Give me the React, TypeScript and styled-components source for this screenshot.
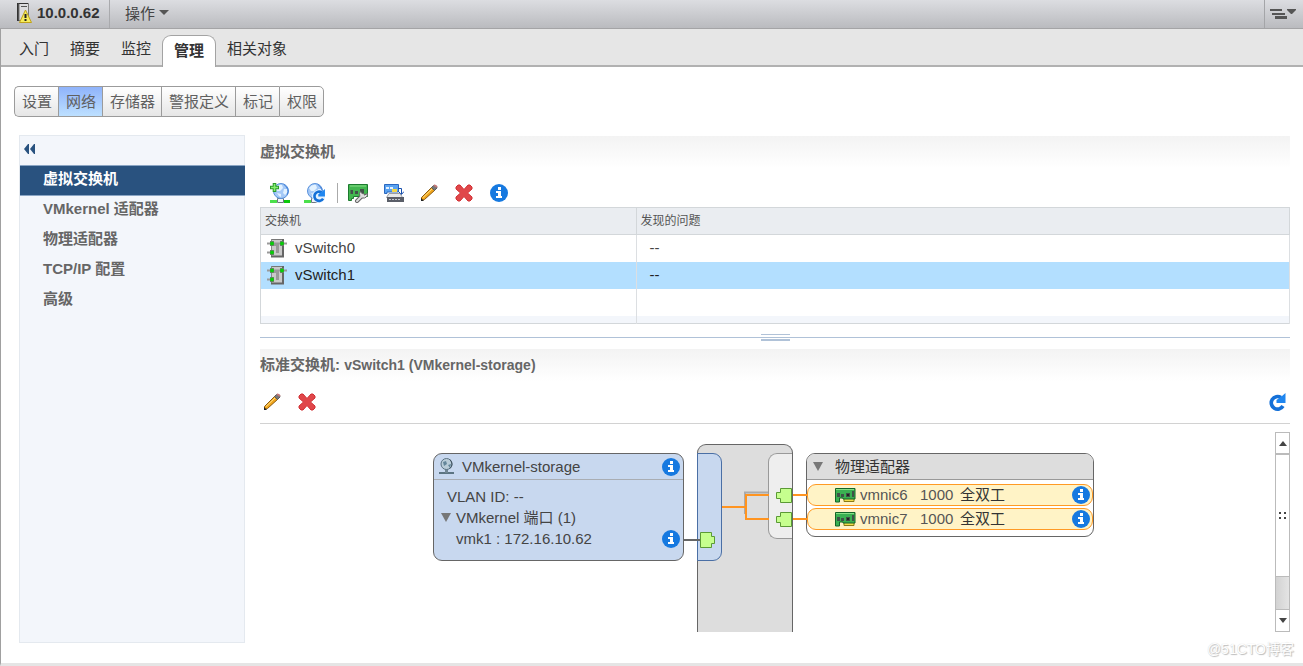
import React from "react";
import styled, { createGlobalStyle, css } from "styled-components";

const Global = createGlobalStyle`
  * { box-sizing: border-box; }
  body {
    margin: 0;
    background: #fff;
    color: #333;
    font: 15px/20px "Liberation Sans", "Noto Sans CJK SC", sans-serif;
  }
  button {
    font: inherit;
    color: inherit;
    background: none;
    border: 0;
    padding: 0;
    margin: 0;
    cursor: pointer;
  }
  a { color: inherit; text-decoration: none; }
  svg { display: block; }
`;

const Page = styled.div`
  display: flex;
  flex-direction: column;
  min-height: 100vh;
`;

/* ---------- header ---------- */

const TitleBar = styled.header`
  display: flex;
  align-items: stretch;
  height: 29px;
  background: linear-gradient(#dcdde1, #babbbf);
  border-bottom: 1px solid #a4a4a6;
`;

const HostName = styled.h1`
  display: flex;
  align-items: center;
  gap: 4px;
  width: 110px;
  margin: 0;
  padding: 0 0 3px 16px;
  border-right: 1px solid #a9aaad;
  font-size: 15px;
  line-height: 20px;
  white-space: nowrap;
`;

const ActionsButton = styled.button`
  display: flex;
  align-items: center;
  gap: 4px;
  padding-left: 15px;
  color: #444;
`;

const Caret = styled.span`
  border: 5px solid transparent;
  border-top-color: #555;
  border-bottom: 0;
  margin-bottom: 4px;
`;

const ViewMenuButton = styled.button`
  width: 39px;
  margin-left: auto;
  padding-left: 5px;
  border-left: 1px solid #a4a5a8;
`;

const Frame = styled.div`
  flex: 1;
  display: flex;
  flex-direction: column;
  border-left: 1px solid #a0a0a0;
  border-bottom: 3px solid #e5e5e5;
`;

const TabStrip = styled.nav`
  display: flex;
  align-items: flex-end;
  gap: 1px;
  height: 38px;
  padding-left: 8px;
  background: #e6e6e6;
  border-bottom: 2px solid #b1b1b1;
`;

const Tab = styled.a<{ $active?: boolean }>`
  height: 30px;
  padding: 4px 10px 0;
  line-height: 20px;
  ${(p) =>
    p.$active &&
    css`
      height: 32px;
      margin-bottom: -2px;
      padding: 5px 11px 0;
      background: #fff;
      border: 1px solid #a3a3a3;
      border-bottom: 0;
      border-radius: 9px 9px 0 0;
      font-weight: bold;
    `}
`;

const Segments = styled.div`
  display: flex;
  margin: 19px 0 0 13px;
`;

const Segment = styled.button<{ $active?: boolean }>`
  height: 31px;
  padding: 0 6px 0 7px;
  border: 1px solid #9b9b9b;
  border-right-width: 0;
  background: ${(p) =>
    p.$active ? "linear-gradient(#8fb3fb, #bde0ff)" : "linear-gradient(#fff, #e6e6e6)"};
  color: #606060;
  &:first-child { border-radius: 5px 0 0 5px; }
  &:last-child { border-radius: 0 5px 5px 0; border-right-width: 1px; }
`;

/* ---------- body ---------- */

const Body = styled.div`
  flex: 1;
  display: flex;
  gap: 15px;
  padding: 18px 13px 20px 18px;
`;

const Sidebar = styled.aside`
  width: 226px;
  flex: none;
  background: #f3f6fb;
  border: 1px solid #e4e9ef;
`;

const CollapseButton = styled.button`
  display: block;
  height: 29px;
  padding: 0 4px 3px;
`;

const SideLink = styled.a<{ $active?: boolean }>`
  display: block;
  height: 30px;
  padding: 3px 23px;
  font-weight: bold;
  color: #666;
  ${(p) =>
    p.$active &&
    css`
      height: 31px;
      margin-right: -1px;
      color: #fff;
      background: #29527f;
      border: solid #8aa5c4;
      border-width: 1px 0;
    `}
`;

const Main = styled.main`
  flex: 1;
  min-width: 0;
  display: flex;
  flex-direction: column;
  padding-top: 1px;
`;

const SectionTitle = styled.h2`
  margin: 0;
  height: 32px;
  padding: 6px 0;
  font-size: 15px;
  line-height: 20px;
  color: #666;
  background: linear-gradient(#f3f3f3, #fff);
`;

const SectionObject = styled.span`
  font-size: 14px;
`;

const Toolbar = styled.div<{ $ruled?: boolean }>`
  display: flex;
  align-items: center;
  height: 39px;
  padding: 10px 0 0 2px;
  ${(p) =>
    p.$ruled &&
    css`
      height: 43px;
      padding: 0;
      border-bottom: 1px solid #d2d2d2;
      button {
        justify-content: flex-start;
        padding-left: 3px;
      }
    `}
`;

const ToolButton = styled.button<{ $end?: boolean }>`
  display: flex;
  justify-content: center;
  align-items: center;
  width: ${(p) => (p.$end ? 25 : 35)}px;
  height: 24px;
  margin-left: ${(p) => (p.$end ? "auto" : 0)};
`;

const Divider = styled.span`
  width: 1px;
  height: 20px;
  margin: 0 3px 0 5px;
  background: #aaa;
`;

const Table = styled.table`
  width: 100%;
  table-layout: fixed;
  border-collapse: collapse;
  border: 1px solid #d3d7da;
  th {
    width: 63.5%;
    height: 27px;
    padding: 0 4px;
    background: #eaedf1;
    border: 1px solid #d3d7da;
    font-size: 12px;
    font-weight: normal;
    text-align: left;
    color: #555;
  }
  th:first-child { width: 36.5%; }
  td {
    height: 27px;
    padding: 0 13px;
    border-right: 1px solid #dcdfe2;
  }
  td:first-child { padding: 0 6px; }
`;

const Row = styled.tr<{ $selected?: boolean }>`
  background: ${(p) => (p.$selected ? "#b3dfff" : "#fff")};
  color: ${(p) => (p.$selected ? "#222" : "#444")};
`;

const TailRow = styled.tr`
  background: #f3f6fb;
  && td { height: 8px; }
`;

const SwitchName = styled.span`
  display: flex;
  align-items: center;
  gap: 8px;
`;

const Splitter = styled.div`
  display: flex;
  flex-direction: column;
  justify-content: center;
  align-items: center;
  height: 25px;
  background: linear-gradient(#b0c2d8, #b0c2d8) 0 13px / 100% 1px no-repeat;
`;

const Grip = styled.span`
  width: 29px;
  height: 7px;
  margin-top: 2px;
  background: #fff;
  border: solid #b0c2d8;
  border-width: 1px 0 2px;
  &::before {
    content: "";
    display: block;
    height: 1px;
    margin-top: 2px;
    background: #b0c2d8;
  }
`;

/* ---------- topology ---------- */

const Viewport = styled.div`
  flex: 1;
  display: flex;
  min-height: 200px;
  margin: 8px 0 11px;
`;

const Canvas = styled.div`
  flex: 1;
  display: flex;
  justify-content: center;
  padding-right: 8px;
  overflow: hidden;
`;

const Topology = styled.div`
  position: relative;
  display: flex;
  align-items: flex-start;
  gap: 13px;
  padding-top: 21px;
`;

const Wires = styled.svg`
  position: absolute;
  left: 0;
  top: 0;
`;

const PortGroup = styled.section`
  width: 251px;
  height: 108px;
  background: #c8d8ef;
  border: 1px solid #666;
  border-radius: 9px;
  color: #444;
`;

const PortGroupHead = styled.div`
  display: flex;
  align-items: center;
  gap: 8px;
  height: 26px;
  padding: 0 3px 0 5px;
  border-bottom: 1px solid #a9adb3;
`;

const PortLines = styled.div`
  padding: 6px 3px 0 13px;
`;

const Line = styled.div<{ $tree?: boolean; $indent?: boolean }>`
  display: flex;
  align-items: center;
  gap: 5px;
  height: 21px;
  margin-left: ${(p) => (p.$tree ? -6 : p.$indent ? 9 : 0)}px;
`;

const InfoButton = styled.button`
  margin-left: auto;
`;

const Twisty = styled.button`
  &::before {
    content: "";
    display: block;
    border: 5px solid transparent;
    border-top: 9px solid #777;
    border-bottom: 0;
  }
`;

const Backplane = styled.div`
  display: flex;
  justify-content: space-between;
  align-items: flex-start;
  width: 96px;
  align-self: stretch;
  margin-top: -9px;
  padding-top: 8px;
  background: #ddd;
  border: 1px solid #666;
  border-bottom: 0;
  border-radius: 9px 9px 0 0;
`;

const PortSide = styled.div`
  width: 25px;
  height: 108px;
  margin-left: -1px;
  background: #c8d8ef;
  border: 1px solid #4a6fa5;
  border-radius: 0 9px 9px 0;
`;

const UplinkSide = styled.div`
  width: 24px;
  height: 86px;
  background: #eee;
  border: 1px solid #999;
  border-right: 0;
  border-radius: 9px 0 0 9px;
`;

const Adapters = styled.section`
  width: 288px;
  height: 84px;
  background: #fff;
  border: 1px solid #666;
  border-radius: 9px;
`;

const AdaptersHead = styled.div`
  display: flex;
  align-items: center;
  gap: 12px;
  height: 26px;
  margin-bottom: 4px;
  padding-left: 6px;
  background: #ddd;
  border-bottom: 1px solid #999;
  border-radius: 8px 8px 0 0;
`;

const Nic = styled.div`
  display: flex;
  align-items: center;
  height: 22px;
  margin-bottom: 2px;
  padding: 0 2px 0 27px;
  background: #fff3c6;
  border: 1px solid #ff9a24;
  border-radius: 9px;
`;

const NicName = styled.span`
  width: 64px;
  padding-left: 4px;
  color: #555;
`;

const NicSpeed = styled.span`
  width: 40px;
  color: #555;
`;

/* ---------- scroll bar ---------- */

const ScrollBar = styled.div`
  display: flex;
  flex-direction: column;
  width: 15px;
  border: 1px solid #bbb;
  background: linear-gradient(90deg, #d2d2d2, #e4e4e4);
`;

const ScrollArrow = styled.button<{ $down?: boolean }>`
  display: flex;
  align-items: center;
  justify-content: center;
  height: 22px;
  background: #fff;
  border: solid #bbb;
  border-width: ${(p) => (p.$down ? "1px 0 0" : "0 0 2px")};
  &::before {
    content: "";
    border: 4px solid transparent;
    ${(p) => (p.$down ? "border-top: 5px solid #444; border-bottom: 0;" : "border-bottom: 5px solid #444; border-top: 0;")}
  }
`;

const ScrollThumb = styled.div`
  flex: 122;
  display: flex;
  align-items: center;
  justify-content: center;
  background: #fff;
  border-bottom: 1px solid #bbb;
`;

const ScrollTrack = styled.div`
  flex: 32;
`;

const Watermark = styled.div`
  position: absolute;
  right: 9px;
  bottom: 7px;
  font-size: 14px;
  line-height: 20px;
  color: #fff;
  text-shadow: 1px 1px 1px #bbb, 0 0 1px #ccc;
`;

/* ---------- icons ---------- */

const HostIcon = () => (
  <svg width="17" height="21" viewBox="0 0 17 21">
    <path d="M1 1h2v18H1z" fill="#333" />
    <path d="M3 1.500h9.500v17H3z" fill="#dcdcde" stroke="#777" />
    <path d="M3 1.500h9" stroke="#333" />
    <path d="M5 4.500h6" stroke="#555" />
    <path d="M9.500 8 15.500 20.500h-12z" fill="#f6ec5c" stroke="#c0a21a" strokeLinejoin="round" />
    <path d="M8.500 12h2v4h-2zM8.500 17h2v2h-2z" fill="#222" />
  </svg>
);

const ViewMenuIcon = () => (
  <svg width="28" height="12" viewBox="0 0 28 12">
    <path d="M0 1h12v2H0zM2 5h13v2H2zM5 8h12v3H5z" fill="#555" />
    <path d="M17 1h9v1l-4 4h-1l-4-4z" fill="#555" />
  </svg>
);

const CollapseIcon = () => (
  <svg width="11" height="10" viewBox="0 0 11 10">
    <path d="M0 5 4 0h1v10H4zM6 5l4-5h1v10h-1z" fill="#29527f" />
  </svg>
);

const Globe = () => (
  <>
    <path d="M0 17h7v3H0z" fill="#4be04b" />
    <path d="M14 17h6v3h-6z" fill="#0bc80b" />
    <path d="M7.500 15.500h6v4h-6z" fill="#f2f5f7" stroke="#6d7780" />
    <circle cx="11" cy="8" r="7.500" fill="#a5c9f7" stroke="#5a92dc" />
    <path d="M5 5q3-4 7-3l1 3-3 3-3 0zM14 6l3 0 1 3-3 3-2-2zM7 10l4 1 0 3-2-1z" fill="#e3f2ff" />
    <path d="M14 1.500q6 5 3 10" stroke="#3f7fd8" fill="none" />
  </>
);

const RefreshShape = () => (
  <>
    <path d="M13 4.500A6.300 6.300 0 1 0 15 13" fill="none" stroke="#1470d8" strokeWidth="3.600" />
    <path d="M14 3 17.500 0v10H8.500V7z" fill="#1f86f0" />
  </>
);

const AddNetworkIcon = () => (
  <svg width="20" height="20" viewBox="0 0 20 20">
    <Globe />
    <path d="M4.500 0v9M0 4.500h9" stroke="#2a9a2a" strokeWidth="3.600" />
    <path d="M4.500 1v7M1 4.500h7" stroke="#86ee70" strokeWidth="1.600" />
  </svg>
);

const RefreshNetworkIcon = () => (
  <svg width="21" height="20" viewBox="0 0 21 20">
    <Globe />
    <path d="M14 16h7v4h-7z" fill="#fff" />
    <g transform="translate(8 6) scale(.74)">
      <circle cx="9" cy="10" r="9" fill="#e2f1ff" />
      <RefreshShape />
    </g>
  </svg>
);

const CardShape = () => (
  <>
    <path d="M.5 1.500h19v12h-14v2h-2v2h-3z" fill="#43b650" stroke="#1c7a2e" />
    <path d="M2 3h16" stroke="#86df86" />
    <path d="M2.500 7h2.500v4H2.500zM7 8h3v3H7zM12 6h4v4h-4z" fill="#42524a" />
  </>
);

const ManageAdaptersIcon = () => (
  <svg width="21" height="20" viewBox="0 0 21 20">
    <CardShape />
    <path d="m9 18 6-6" stroke="#666" strokeWidth="4" strokeLinecap="round" />
    <path d="M12.500 8.500a4 4 0 1 0 7 2l-3 1.500-2-1z" fill="#e4e4e4" stroke="#666" />
    <path d="m9 18 6-6" stroke="#ddd" strokeWidth="2" strokeLinecap="round" />
  </svg>
);

const MigrateIcon = () => (
  <svg width="20" height="20" viewBox="0 0 20 20">
    <path d="M.5 1.500h14v7.500H3v1.500H.5z" fill="#5aa2f0" stroke="#2b68c0" />
    <path d="M2 4h3v2H2zM6 4h3v2H6z" fill="#e5f2ff" />
    <path d="M8 6h5v3H8z" fill="#f3d748" />
    <path d="M14 5.500h3.500V11M14.500 8.500l3 3 2.500-3" fill="none" stroke="#174fae" />
    <path d="M5 10.500h11l2.500 4h-16z" fill="#e6e8ea" stroke="#9a9da2" />
    <path d="M3 14h17v5H3z" fill="#5a5e68" />
    <path d="M5 16.500h12" stroke="#c4c8cf" strokeDasharray="2 1" />
  </svg>
);

const PencilIcon = () => (
  <svg width="18" height="18" viewBox="0 0 18 18">
    <path d="M1.500 16.500v-3L12 3l3 3L4.500 15.500z" fill="#f2a61c" stroke="#8a5a10" />
    <path d="M3 13.500 12.500 4.500" stroke="#ffe38c" />
    <path d="m11.500 3.500 2-2 3 .5.5 2-2.500 2.500z" fill="#777" stroke="#5c5c5c" />
    <path d="m14 1 3 2" stroke="#c77878" strokeWidth="2" />
    <path d="M1 17v-3l3 3z" fill="#222" />
  </svg>
);

const DeleteIcon = () => (
  <svg width="18" height="18" viewBox="0 0 18 18">
    <path
      d="M1 3 3 1h2l4 4.500L13 1h2l2 2v2l-4.500 4 4.500 4v2l-2 2h-2L9 12.500 5 17H3l-2-2v-2l4.500-4L1 5z"
      fill="#e0474a"
      stroke="#d23135"
      strokeLinejoin="round"
    />
  </svg>
);

const InfoIcon = () => (
  <svg width="18" height="18" viewBox="0 0 18 18">
    <circle cx="9" cy="9" r="9" fill="#1679e0" />
    <path d="M8 3h3v3H8zM6 7h5v5h1v2H6v-2h2V9H6z" fill="#fff" />
  </svg>
);

const RefreshIcon = () => (
  <svg width="18" height="18" viewBox="0 0 18 18">
    <RefreshShape />
  </svg>
);

const SwitchIcon = () => (
  <svg width="20" height="20" viewBox="0 0 20 20">
    <path d="M4 1h13v18H4z" fill="#c9c9c9" />
    <path d="M4 1.500h13" stroke="#777" />
    <path d="M4.500 1v18" stroke="#888" />
    <path d="M16 1v17.500H4" fill="none" stroke="#666" strokeWidth="2" />
    <path d="M0 5.500h20M0 14.500h5" stroke="#9a9a9a" strokeWidth="2" />
    <path d="M7 5h5v10H9V8H7z" fill="#999" />
    <path d="M3 3h4v5H3zM13 3h4v5h-4zM3 12h4v5H3z" fill="#777" />
    <circle cx="5" cy="5.500" r="2" fill="#0acb0a" />
    <circle cx="15" cy="5.500" r="2" fill="#0acb0a" />
    <circle cx="5" cy="14.500" r="2" fill="#0acb0a" />
  </svg>
);

const NetworkIcon = () => (
  <svg width="15" height="17" viewBox="0 0 15 17">
    <path d="M0 15h15" stroke="#5c7482" strokeWidth="2" />
    <path d="M6 11h3v4H6z" fill="#6f8592" />
    <circle cx="7.500" cy="6" r="5.500" fill="#b9ccd8" stroke="#5b7383" />
    <path d="M4 4l3-1 1 3-3 2zM9 7l3-1-1 4z" fill="#64869a" />
    <path d="M11 1.500q4 5 0 9" fill="none" stroke="#40525e" />
  </svg>
);

const NicIcon = () => (
  <svg width="21" height="16" viewBox="0 0 21 16">
    <path d="M9 11.500h10v3H9z" fill="#f2dc4a" stroke="#8a7a14" />
    <path d="M.5 1.500h19.500v10.500H8v-1H4.500v4H.5z" fill="#3bb052" stroke="#136427" />
    <path d="M1 2.500h18" stroke="#86df86" />
    <path d="M2 6h3v4H2zM6 7h3v3H6zM11 6h4v4h-4zM17 4h2v6h-2z" fill="#3f5247" />
    <path d="M12 7h2v2h-2z" fill="#222" />
  </svg>
);

/* ---------- page ---------- */

const tabs = ["入门", "摘要", "监控", "管理", "相关对象"];
const segments = ["设置", "网络", "存储器", "警报定义", "标记", "权限"];
const sideLinks = ["虚拟交换机", "VMkernel 适配器", "物理适配器", "TCP/IP 配置", "高级"];
const switches = ["vSwitch0", "vSwitch1"];
const nics = ["vmnic6", "vmnic7"];

export default function App() {
  return (
    <Page>
      <Global />
      <TitleBar>
        <HostName>
          <HostIcon />
          10.0.0.62
        </HostName>
        <ActionsButton>
          操作
          <Caret />
        </ActionsButton>
        <ViewMenuButton aria-label="视图">
          <ViewMenuIcon />
        </ViewMenuButton>
      </TitleBar>
      <Frame>
        <TabStrip>
          {tabs.map((t) => (
            <Tab key={t} href="#" $active={t === "管理"}>
              {t}
            </Tab>
          ))}
        </TabStrip>
        <Segments>
          {segments.map((s) => (
            <Segment key={s} $active={s === "网络"}>
              {s}
            </Segment>
          ))}
        </Segments>
        <Body>
          <Sidebar>
            <CollapseButton aria-label="折叠">
              <CollapseIcon />
            </CollapseButton>
            {sideLinks.map((l, i) => (
              <SideLink key={l} href="#" $active={i === 0}>
                {l}
              </SideLink>
            ))}
          </Sidebar>
          <Main>
            <SectionTitle>虚拟交换机</SectionTitle>
            <Toolbar>
              <ToolButton aria-label="添加网络"><AddNetworkIcon /></ToolButton>
              <ToolButton aria-label="刷新网络"><RefreshNetworkIcon /></ToolButton>
              <Divider />
              <ToolButton aria-label="管理适配器"><ManageAdaptersIcon /></ToolButton>
              <ToolButton aria-label="迁移"><MigrateIcon /></ToolButton>
              <ToolButton aria-label="编辑"><PencilIcon /></ToolButton>
              <ToolButton aria-label="移除"><DeleteIcon /></ToolButton>
              <ToolButton aria-label="信息"><InfoIcon /></ToolButton>
            </Toolbar>
            <Table>
              <thead>
                <tr>
                  <th>交换机</th>
                  <th>发现的问题</th>
                </tr>
              </thead>
              <tbody>
                {switches.map((s) => (
                  <Row key={s} $selected={s === "vSwitch1"}>
                    <td>
                      <SwitchName>
                        <SwitchIcon />
                        {s}
                      </SwitchName>
                    </td>
                    <td>--</td>
                  </Row>
                ))}
                <Row>
                  <td />
                  <td />
                </Row>
                <TailRow>
                  <td />
                  <td />
                </TailRow>
              </tbody>
            </Table>
            <Splitter>
              <Grip />
            </Splitter>
            <SectionTitle>
              标准交换机: <SectionObject>vSwitch1 (VMkernel-storage)</SectionObject>
            </SectionTitle>
            <Toolbar $ruled>
              <ToolButton aria-label="编辑"><PencilIcon /></ToolButton>
              <ToolButton aria-label="移除"><DeleteIcon /></ToolButton>
              <ToolButton aria-label="刷新" $end><RefreshIcon /></ToolButton>
            </Toolbar>
            <Viewport>
              <Canvas>
                <Topology>
                  <PortGroup>
                    <PortGroupHead>
                      <NetworkIcon />
                      VMkernel-storage
                      <InfoButton aria-label="信息"><InfoIcon /></InfoButton>
                    </PortGroupHead>
                    <PortLines>
                      <Line>VLAN ID: --</Line>
                      <Line $tree>
                        <Twisty aria-label="折叠" />
                        VMkernel 端口 (1)
                      </Line>
                      <Line $indent>
                        vmk1 : 172.16.10.62
                        <InfoButton aria-label="信息"><InfoIcon /></InfoButton>
                      </Line>
                    </PortLines>
                  </PortGroup>
                  <Backplane>
                    <PortSide />
                    <UplinkSide />
                  </Backplane>
                  <Adapters>
                    <AdaptersHead>
                      <Twisty aria-label="折叠" />
                      物理适配器
                    </AdaptersHead>
                    {nics.map((n) => (
                      <Nic key={n}>
                        <NicIcon />
                        <NicName>{n}</NicName>
                        <NicSpeed>1000</NicSpeed>
                        全双工
                        <InfoButton aria-label="信息"><InfoIcon /></InfoButton>
                      </Nic>
                    ))}
                  </Adapters>
                  <Wires width="374" height="140" viewBox="0 0 374 140">
                    <path d="M251 108h16" stroke="#666" strokeWidth="2" />
                    <path d="M312 82V60.500h23" fill="none" stroke="#aaa" strokeWidth="2" />
                    <path d="M289 75h24M336 63h-23v24h23M360 63h14M360 87h14" fill="none" stroke="#ff9420" strokeWidth="2" />
                    <path
                      d="M267.500 100.500h11v4h3v7h-3v4h-11zM358.500 56.500v14h-11v-4h-4v-6h4v-4zM358.500 80.500v14h-11v-4h-4v-6h4v-4z"
                      fill="#c6ff8e"
                      stroke="#5b9a35"
                    />
                  </Wires>
                </Topology>
              </Canvas>
              <ScrollBar>
                <ScrollArrow aria-label="向上滚动" />
                <ScrollThumb>
                  <svg width="8" height="8" viewBox="0 0 8 8">
                    <path d="M0 0h2v2H0zM5 0h2v2H5zM0 5h2v2H0zM5 5h2v2H5z" fill="#444" />
                  </svg>
                </ScrollThumb>
                <ScrollTrack />
                <ScrollArrow aria-label="向下滚动" $down />
              </ScrollBar>
            </Viewport>
          </Main>
        </Body>
      </Frame>
      <Watermark>@51CTO博客</Watermark>
    </Page>
  );
}
